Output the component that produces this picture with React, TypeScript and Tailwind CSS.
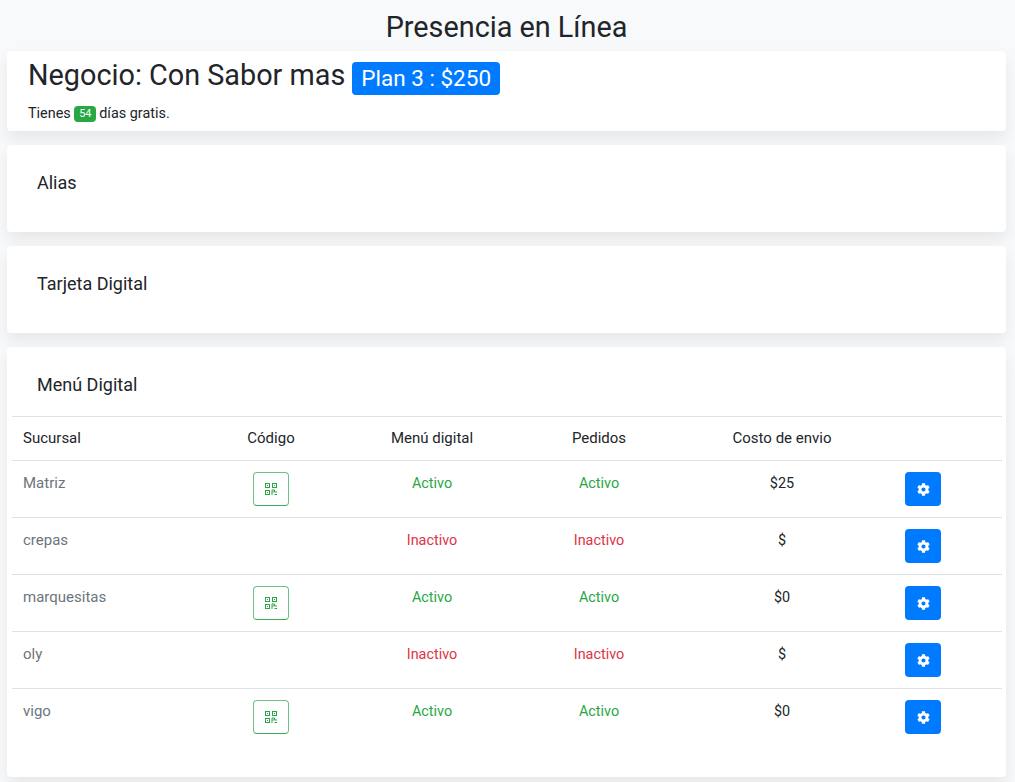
import { FaCog } from 'react-icons/fa'

const rows = [
  { name: 'Matriz', active: true, cost: '$25' },
  { name: 'crepas', active: false, cost: '$' },
  { name: 'marquesitas', active: true, cost: '$0' },
  { name: 'oly', active: false, cost: '$' },
  { name: 'vigo', active: true, cost: '$0' },
]

const cardClass = 'bg-white rounded-[4px] shadow-[0_8px_16px_rgba(0,0,0,0.075)]'

function QrIcon() {
  return (
    <svg width="12" height="12" viewBox="0 0 12 12" fill="none" stroke="#28a745" strokeWidth="1">
      <rect x="0.5" y="0.5" width="4" height="4" />
      <rect x="7.5" y="0.5" width="4" height="4" />
      <rect x="0.5" y="7.5" width="4" height="4" />
      <rect x="2" y="2" width="1" height="1" fill="#28a745" stroke="none" />
      <rect x="9" y="2" width="1" height="1" fill="#28a745" stroke="none" />
      <rect x="2" y="9" width="1" height="1" fill="#28a745" stroke="none" />
      <path d="M7 12V7H9.5V9H12M9.5 11.5H12M7.5 9H9" strokeWidth="1" />
    </svg>
  )
}

function GearButton() {
  return (
    <button className="flex h-[34px] w-9 items-center justify-center rounded-[4px] bg-[#007bff]">
      <FaCog size={13} color="#fff" />
    </button>
  )
}

function Status({ active }: { active: boolean }) {
  return active ? <span className="text-[#28a745]">Activo</span> : <span className="text-[#dc3545]">Inactivo</span>
}

export default function App() {
  return (
    <div className="min-h-[782px] bg-[#f8f9fa] pl-[7px] pr-[9px] pb-[5px] font-['Roboto',sans-serif] text-[14.4px] text-[#212529]">
      <h3 className="h-[51px] pt-[6px] text-center text-[28.8px] leading-[42px]">Presencia en Línea</h3>

      <div className={`${cardClass} h-[80px] px-[21px] pt-[4px]`}>
        <div className="flex items-center gap-[7px] text-[28.8px] leading-[38px]">
          <span>Negocio: Con Sabor mas</span>
          <span className="mt-[7px] flex h-[33px] items-center rounded-[4px] bg-[#007bff] px-[9px] text-[22.5px] leading-none text-white">
            Plan 3 : $250
          </span>
        </div>
        <p className="mt-[8px] flex items-center text-[14.4px] leading-[21px]">
          Tienes
          <span className="ml-[3.5px] mr-[3px] flex h-[16px] w-[22px] items-center justify-center rounded-[4px] bg-[#28a745] text-[10.8px] text-white">
            54
          </span>
          días gratis.
        </p>
      </div>

      <div className={`${cardClass} mt-[14px] h-[87px] px-[30px] pt-[26px]`}>
        <h5 className="text-[18px] leading-[24px]">Alias</h5>
      </div>

      <div className={`${cardClass} mt-[14px] h-[87px] px-[30px] pt-[26px]`}>
        <h5 className="text-[18px] leading-[24px]">Tarjeta Digital</h5>
      </div>

      <div className={`${cardClass} mt-[14px] h-[430px] px-[5px] pt-[26px]`}>
        <h5 className="px-[25px] text-[18px] leading-[24px]">Menú Digital</h5>
        <table className="mt-[19px] w-[990px] table-fixed border-collapse">
          <colgroup>
            <col className="w-[193px]" />
            <col className="w-[132px]" />
            <col className="w-[190px]" />
            <col className="w-[144px]" />
            <col className="w-[222px]" />
            <col className="w-[109px]" />
          </colgroup>
          <thead>
            <tr className="h-[44px] border-t border-[#dee2e6] text-[15px]">
              <th className="pl-[11px] text-left font-normal">Sucursal</th>
              <th className="font-normal">Código</th>
              <th className="font-normal">Menú digital</th>
              <th className="font-normal">Pedidos</th>
              <th className="font-normal">Costo de envio</th>
              <th />
            </tr>
          </thead>
          <tbody>
            {rows.map(r => (
              <tr key={r.name} className="h-[57px] border-t border-[#dee2e6] align-top">
                <td className="pl-[11px] pt-[12px] text-[15px] leading-[21px] text-[#6c757d]">{r.name}</td>
                <td className="pt-[11px]">
                  {r.active && (
                    <button className="mx-auto flex h-[34px] w-9 items-center justify-center rounded-[4px] border border-[#6cc282] border-b-[#3dab57]">
                      <QrIcon />
                    </button>
                  )}
                </td>
                <td className="pt-[12px] text-center"><Status active={r.active} /></td>
                <td className="pt-[12px] text-center"><Status active={r.active} /></td>
                <td className="pt-[12px] text-center">{r.cost}</td>
                <td className="pl-[12px] pt-[11px]"><GearButton /></td>
              </tr>
            ))}
          </tbody>
        </table>
      </div>
    </div>
  )
}
